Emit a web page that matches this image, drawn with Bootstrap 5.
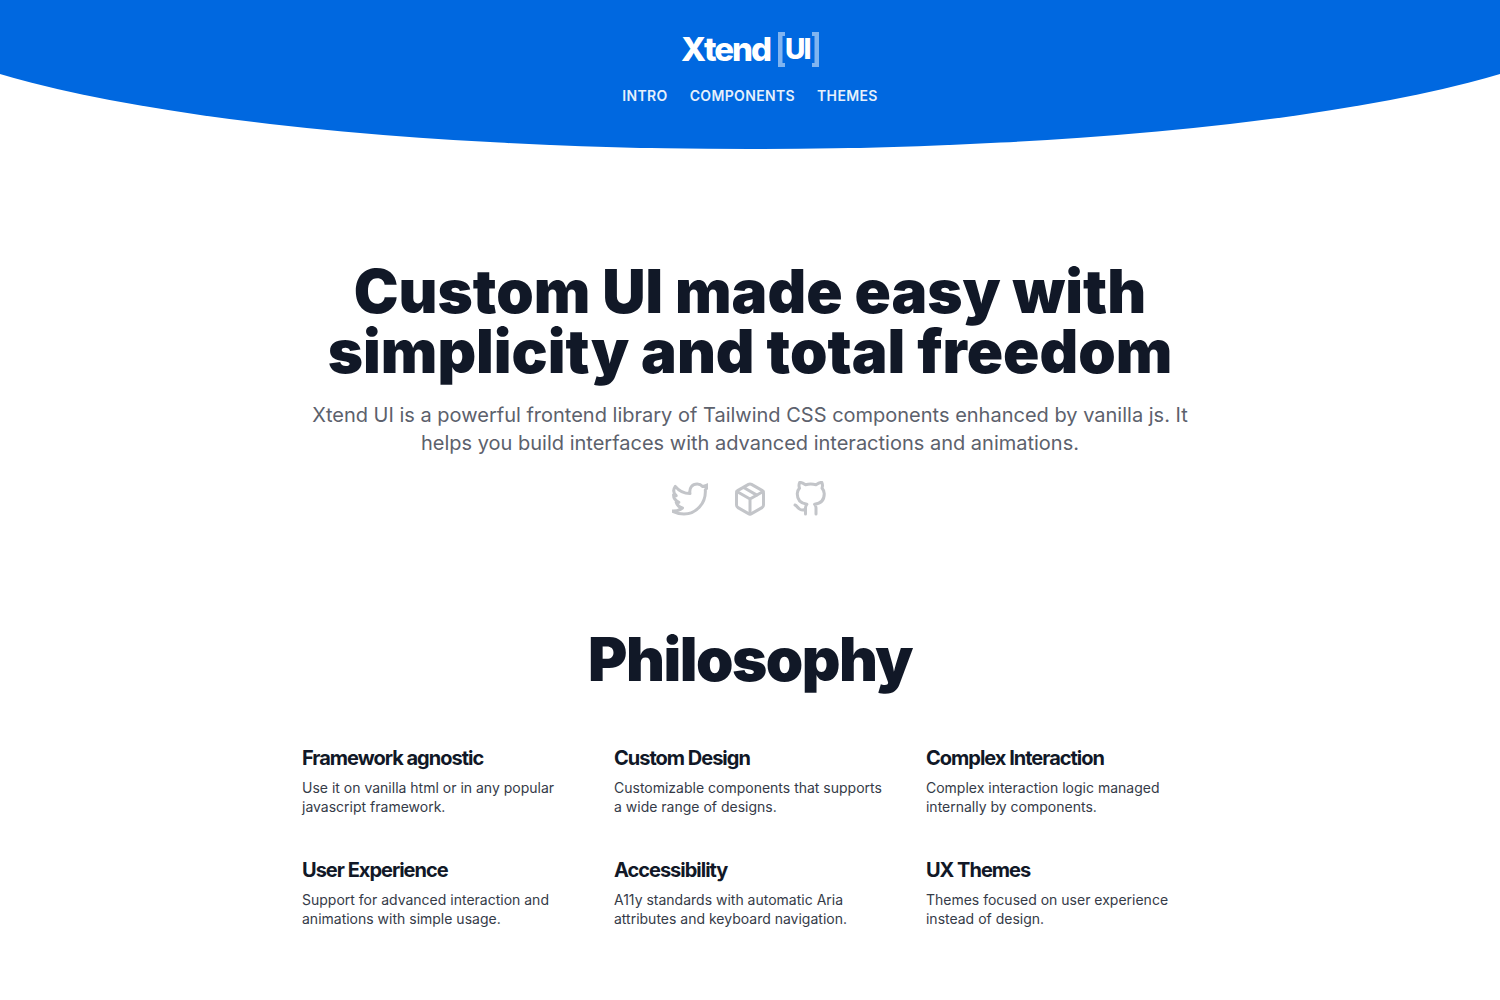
<!DOCTYPE html>
<html lang="en">
<head>
<meta charset="utf-8">
<meta name="viewport" content="width=device-width, initial-scale=1">
<title>Xtend UI</title>
<link href="https://cdn.jsdelivr.net/npm/bootstrap@5.3.0/dist/css/bootstrap.min.css" rel="stylesheet">
<style>
  body { font-family: Inter, "Liberation Sans", sans-serif; color: #111827; }
  .site-header { background: #0068e0; min-height: 149px; padding-top: 32px; clip-path: ellipse(57.6% 100% at 50% 0); }
  .brand { color: #fff; letter-spacing: -.125em; gap: 8px; }
  .brand-name { font-size: 33px; line-height: 34px; font-weight: 800; }
  .brand-box { width: 41px; height: 35px; padding-left: 7px; }
  .brand-box svg { position: absolute; inset: 0; }
  .brand-ui { font-size: 28px; line-height: 35px; font-weight: 800; }
  .site-nav { gap: 22px; margin-top: 19px; }
  .site-nav a { color: #fff; opacity: .9; font-size: 14px; line-height: 20px; font-weight: 600; letter-spacing: .025em; }
  .page-main { max-width: 920px; padding: 0 12px; }
  .hero { padding-top: 112px; }
  .display-title { font-size: 60px; line-height: 60px; font-weight: 900; }
  .section-title { letter-spacing: -.025em; margin-bottom: 55px; }
  .intro { font-size: 20px; line-height: 28px; color: #5c616c; margin: 20px 0 24px; }
  .social { gap: 24px; }
  .social a { color: #c3c5c9; }
  .philosophy { padding-top: 112px; }
  .feature-grid { --bs-gutter-x: 40px; --bs-gutter-y: 32px; }
  .feature-title { font-size: 20px; line-height: 28px; font-weight: 700; letter-spacing: -.05em; margin-bottom: 6px; }
  .feature-text { font-size: 14px; line-height: 19px; color: #353b48; padding-bottom: 8px; }
</style>
<script src="https://cdn.jsdelivr.net/npm/bootstrap@5.3.0/dist/js/bootstrap.bundle.min.js"></script>
</head>
<body>
<header class="site-header d-flex flex-column align-items-center">
  <a href="#" class="brand d-flex text-decoration-none">
    <span class="brand-name">Xtend</span>
    <span class="brand-box position-relative">
      <svg width="41" height="35" viewBox="0 0 41 35" fill="#fff" fill-opacity=".5" aria-hidden="true">
        <path d="M0 0h7v4H4.500v27H7v4H0zM34 0h7v35h-7v-4h2.500V4H34z"/>
      </svg>
      <span class="brand-ui d-block">UI</span>
    </span>
  </a>
  <nav class="site-nav d-flex text-uppercase" aria-label="Main">
    <a class="text-decoration-none" href="#intro">Intro</a>
    <a class="text-decoration-none" href="#components">Components</a>
    <a class="text-decoration-none" href="#themes">Themes</a>
  </nav>
</header>

<main class="page-main mx-auto">
  <section class="hero text-center" id="intro">
    <h1 class="display-title mb-0">Custom UI made easy with simplicity and total freedom</h1>
    <p class="intro">Xtend UI is a powerful frontend library of Tailwind CSS components enhanced by vanilla js. It helps you build interfaces with advanced interactions and animations.</p>
    <div class="social d-flex justify-content-center">
      <a href="#" aria-label="Twitter">
        <svg class="d-block" width="36" height="36" viewBox="0 0 24 24" fill="none" stroke="currentColor" stroke-width="2" stroke-linecap="round" stroke-linejoin="round"><path d="M2.200 3.600C4.500 6.500 8 8.400 12 8.400 11.300 4.500 13.500 2 16.800 2c1.500 0 2.700.6 3.600 1.600 1.400-.2 2.600-.6 3.800-1.200-.3 1.400-1 2.600-2 3.500C22.800 15 16 22 8 22c-3 0-5.500-.7-8-2 2.600.2 5-.5 7-2-2.100-.4-3.600-1.800-4.200-3.800h1.800C2.400 13.200 1 11.600 1 9.200l1.800.6C.8 8 .8 5.600 2.200 3.600z"/></svg>
      </a>
      <a href="#" aria-label="Package">
        <svg class="d-block" width="36" height="36" viewBox="0 0 24 24" fill="none" stroke="currentColor" stroke-width="2" stroke-linecap="round" stroke-linejoin="round"><path d="M16.500 9.400 7.500 4.210M21 16V8a2 2 0 0 0-1-1.730l-7-4a2 2 0 0 0-2 0l-7 4A2 2 0 0 0 3 8v8a2 2 0 0 0 1 1.730l7 4a2 2 0 0 0 2 0l7-4A2 2 0 0 0 21 16z"/><path d="M3.270 6.960 12 12.010l8.730-5.050M12 22.080V12"/></svg>
      </a>
      <a href="#" aria-label="GitHub">
        <svg class="d-block" width="36" height="36" viewBox="0 0 24 24" fill="none" stroke="currentColor" stroke-width="2" stroke-linecap="round" stroke-linejoin="round"><path d="M9 19c-5 1.500-5-2.500-7-3m14 6v-3.870a3.370 3.370 0 0 0-.94-2.610c3.140-.35 6.440-1.540 6.440-7A5.440 5.440 0 0 0 20 4.770 5.070 5.070 0 0 0 19.910 1S18.730.65 16 2.480a13.380 13.380 0 0 0-7 0C6.270.65 5.090 1 5.090 1A5.070 5.070 0 0 0 5 4.770a5.440 5.440 0 0 0-1.500 3.780c0 5.420 3.300 6.610 6.440 7A3.370 3.370 0 0 0 9 18.130V22"/></svg>
      </a>
    </div>
  </section>

  <section class="philosophy" id="components">
    <h2 class="display-title section-title text-center">Philosophy</h2>
    <div class="row feature-grid">
      <div class="col-md-4"><h3 class="feature-title">Framework agnostic</h3><p class="feature-text mb-0">Use it on vanilla html or in any popular javascript framework.</p></div>
      <div class="col-md-4"><h3 class="feature-title">Custom Design</h3><p class="feature-text mb-0">Customizable components that supports a wide range of designs.</p></div>
      <div class="col-md-4"><h3 class="feature-title">Complex Interaction</h3><p class="feature-text mb-0">Complex interaction logic managed internally by components.</p></div>
      <div class="col-md-4"><h3 class="feature-title">User Experience</h3><p class="feature-text mb-0">Support for advanced interaction and animations with simple usage.</p></div>
      <div class="col-md-4"><h3 class="feature-title">Accessibility</h3><p class="feature-text mb-0">A11y standards with automatic Aria attributes and keyboard navigation.</p></div>
      <div class="col-md-4"><h3 class="feature-title">UX Themes</h3><p class="feature-text mb-0">Themes focused on user experience instead of design.</p></div>
    </div>
  </section>
</main>
</body>
</html>
